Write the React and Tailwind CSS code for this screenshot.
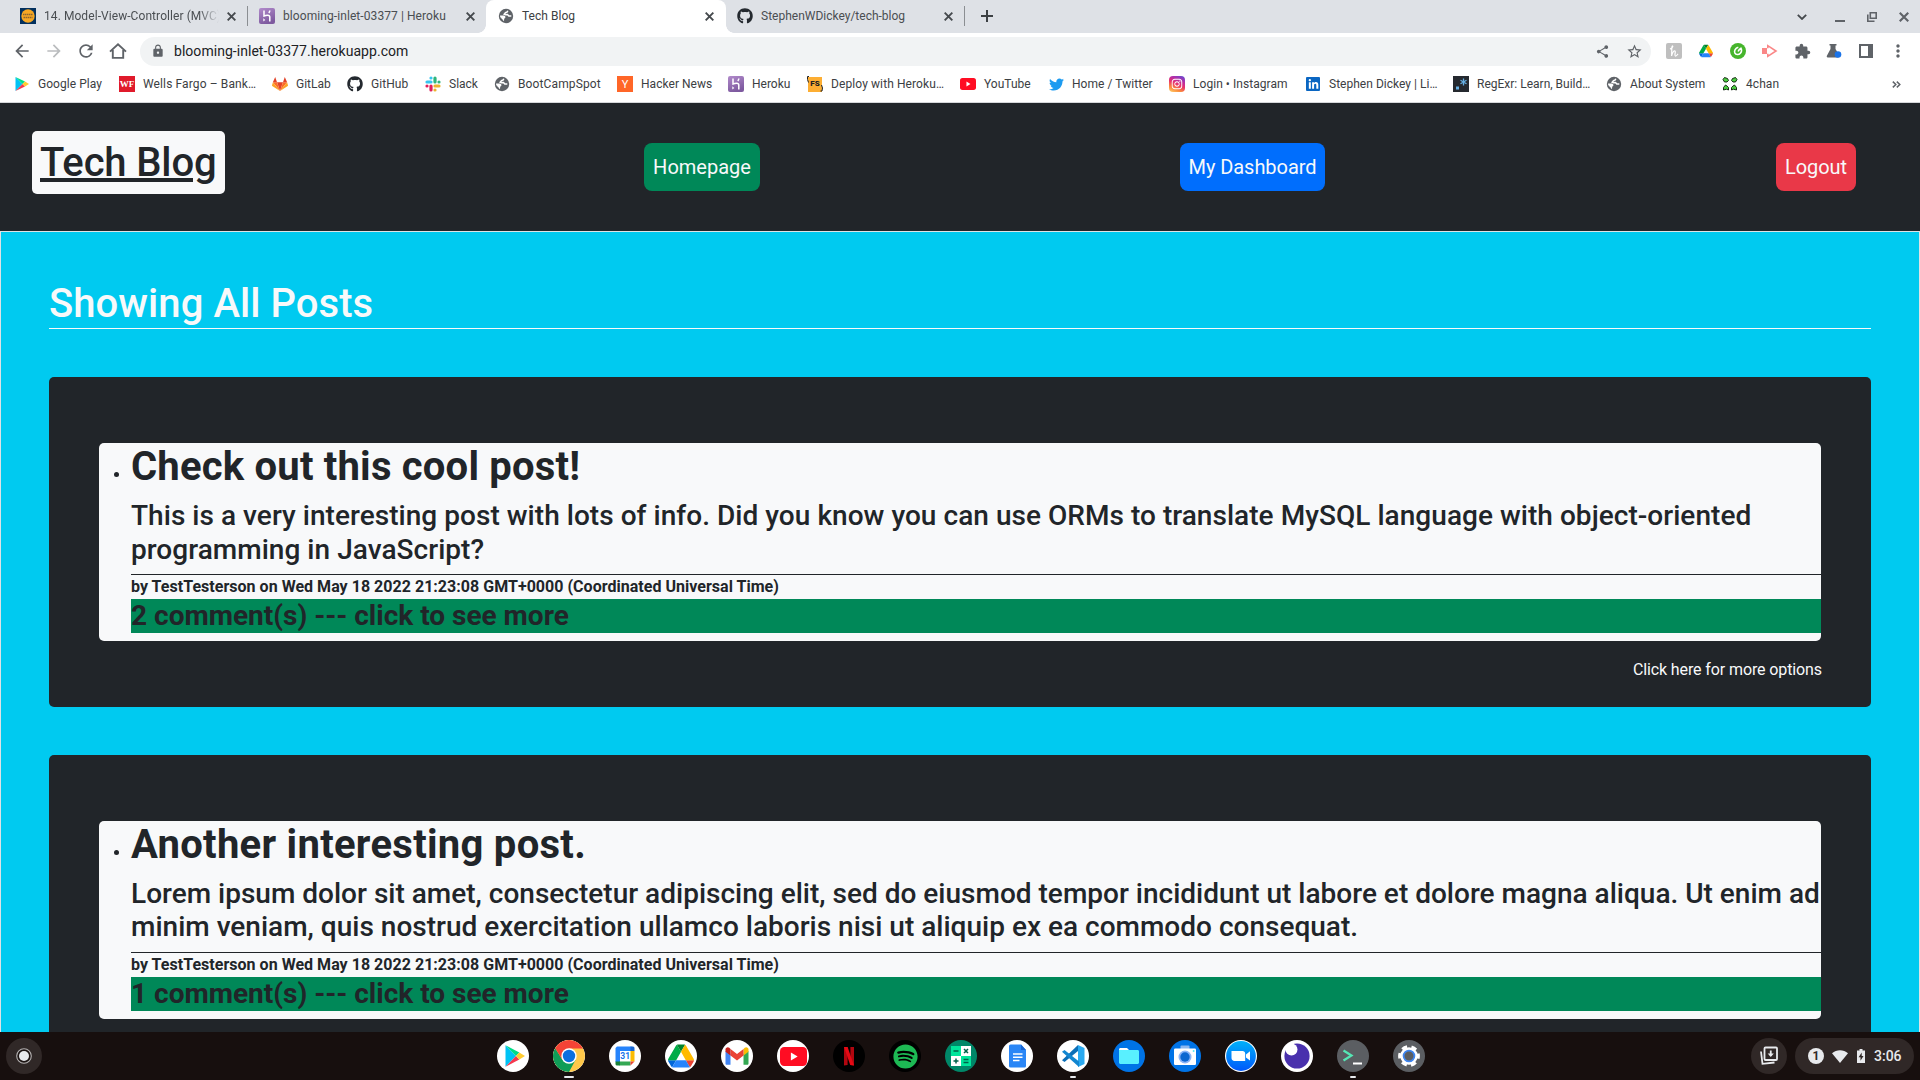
import React from 'react';
import { FaGithub, FaTwitter, FaInstagram, FaLinkedinIn, FaSpotify } from 'react-icons/fa';
import {
  MdArrowBack, MdArrowForward, MdRefresh, MdLock, MdShare, MdStarBorder,
  MdExtension, MdMoreVert,
} from 'react-icons/md';

/* ---------- Small shared glyphs ---------- */

const Close = ({ size = 8, w = 1.7, color = '#45494d' }) => (
  <svg width={size} height={size} viewBox="0 0 8 8" className="shrink-0">
    <path d="M.6.6l6.8 6.8M7.4.6L.6 7.4" stroke={color} strokeWidth={w} />
  </svg>
);

const Globe = () => (
  <svg width="16" height="16" viewBox="0 0 16 16">
    <circle cx="8" cy="8" r="7.200" fill="#5f6368" />
    <path d="M9.800 2.700L9.200 4 7.500 4.700 6.200 6.200l1.300.6 2-.2 1.300 1.500h2.500" stroke="#fff" strokeWidth="1.500" fill="none" />
    <path d="M2 7.400l3.600.2c1.500.2 2.200 1.200 1.700 2.200l-1.100.9-.2 2.300C3.600 12.200 2 10.200 2 7.400z" fill="#fff" />
    <path d="M2.300 9.600c.5 1.500 1.600 2.500 2.600 3" stroke="#5f6368" strokeWidth="1.400" fill="none" />
  </svg>
);

const Heroku = () => (
  <svg width="16" height="16" viewBox="0 0 16 16">
    <defs>
      <linearGradient id="hk" x1="0" y1="0" x2="0.4" y2="1">
        <stop offset="0" stopColor="#b18acb" />
        <stop offset="1" stopColor="#7e5a9f" />
      </linearGradient>
    </defs>
    <rect width="16" height="16" rx="2" fill="url(#hk)" />
    <path d="M5 2.500v5.500c2-.8 5.800-1.400 5.800 1v4.500M10.800 2.500c0 1-.4 1.800-1 2.500" stroke="#fff" strokeWidth="1.500" fill="none" />
    <path d="M4.300 10.200l2 1.700-2 1.700z" fill="#fff" />
  </svg>
);

const PlayLogo = ({ size = 16 }) => (
  <svg width={size} height={size} viewBox="0 0 16 16">
    <path d="M1.500 1v14l7-7z" fill="#00c3f5" />
    <path d="M1.500 1l7 7 2.500-2.400z" fill="#00e08a" />
    <path d="M1.500 15l7-7 2.500 2.400z" fill="#f5394f" />
    <path d="M11 5.600L8.500 8l2.500 2.400L15 8z" fill="#ffcb31" />
  </svg>
);

const DriveLogo = ({ size = 16 }) => (
  <svg width={size} height={size} viewBox="0 0 87.3 78">
    <path d="M6.600 66.850l3.850 6.650c.8 1.400 1.950 2.500 3.300 3.300l13.750-23.800h-27.500c0 1.550.4 3.100 1.200 4.500z" fill="#0066da" />
    <path d="M43.650 25L29.900 1.200c-1.350.8-2.500 1.900-3.300 3.300l-25.400 44A9 9 0 0 0 0 53h27.500z" fill="#00ac47" />
    <path d="M73.550 76.800c1.350-.8 2.500-1.900 3.300-3.300l1.600-2.750 7.650-13.250c.8-1.400 1.200-2.950 1.200-4.500H59.800l5.850 11.500z" fill="#ea4335" />
    <path d="M43.650 25L57.400 1.200C56.050.4 54.500 0 52.900 0H34.400c-1.600 0-3.150.45-4.500 1.200z" fill="#00832d" />
    <path d="M59.800 53H27.500L13.750 76.800c1.350.8 2.900 1.200 4.500 1.200h50.800c1.600 0 3.150-.45 4.500-1.200z" fill="#2684fc" />
    <path d="M73.400 26.500L60.700 4.500c-.8-1.400-1.950-2.500-3.300-3.300L43.650 25 59.800 53h27.450c0-1.550-.4-3.100-1.200-4.500z" fill="#ffba00" />
  </svg>
);

const YouTubeMark = ({ w = 16, h = 12 }) => (
  <svg width={w} height={h} viewBox="0 0 26 18" preserveAspectRatio="none">
    <rect width="26" height="18" rx="4" fill="#ff0d23" />
    <path d="M10.500 5.200v7.600L17 9z" fill="#fff" />
  </svg>
);

const Bootcamp = () => (
  <svg width="16" height="16" viewBox="0 0 16 16">
    <rect width="16" height="16" fill="#03305e" />
    <circle cx="8" cy="8" r="6.700" fill="#f6a723" />
    <path d="M3 6.500h10M3.500 9.500h9" stroke="#8a6430" strokeWidth="1.600" strokeDasharray="1.500 .5" />
  </svg>
);

const GitLab = () => (
  <svg width="16" height="16" viewBox="0 0 16 16">
    <path d="M8 15L5 6.300h6z" fill="#e24329" />
    <path d="M8 15L5 6.300H.9z" fill="#fc6d26" />
    <path d="M8 15l3-8.700h4.100z" fill="#fc6d26" />
    <path d="M.9 6.300L0 9.200c-.1.300 0 .5.200.7L8 15zM15.100 6.300l.9 2.900c.1.300 0 .5-.2.700L8 15z" fill="#fca326" />
    <path d="M.9 6.300H5L3.200 1zM15.100 6.300H11L12.800 1z" fill="#e24329" />
  </svg>
);

const Slack = () => (
  <svg width="16" height="16" viewBox="0 0 16 16" strokeWidth="3.200" strokeLinecap="round">
    <path d="M6 2v0M6 6H2" stroke="#36c5f0" />
    <path d="M10 2v4M14 6v0" stroke="#2eb67d" />
    <path d="M6 10v4M2 10v0" stroke="#e01e5a" />
    <path d="M10 10h4M10 14v0" stroke="#ecb22e" />
  </svg>
);

const LetterTile = ({ className, children }) => (
  <span className={'flex h-4 w-4 items-center justify-center leading-none ' + className}>{children}</span>
);

const DeployIcon = () => (
  <span className="relative flex h-4 w-4 items-center justify-center">
    <span className="flex h-[15px] w-[14px] items-center justify-center bg-[#fdae33] text-[8px] leading-none font-black text-[#222]">FS</span>
    <svg className="absolute top-0 left-0" width="16" height="16" viewBox="0 0 16 16" fill="none" stroke="#222" strokeWidth="1">
      <path d="M2 .5H.5v3l1 3M14.500 9l1 3-.5 3h-1.500" />
    </svg>
  </span>
);

const InstagramTile = () => (
  <span className="flex h-4 w-4 items-center justify-center rounded-[4px] bg-[linear-gradient(25deg,#fec564_5%,#fb8a3c_25%,#e8306d_50%,#b32ea8_72%,#5a4fd6)] text-white">
    <FaInstagram size={12} />
  </span>
);

const RegExr = () => (
  <svg width="16" height="16" viewBox="0 0 16 16">
    <rect width="16" height="16" fill="#25292f" />
    <rect x="3" y="10.500" width="3" height="3" fill="#67b0e4" />
    <path d="M10.500 2.500v7M7.500 4.200l6 3.500M13.500 4.200l-6 3.500" stroke="#67b0e4" strokeWidth="1.300" />
  </svg>
);

const Clover = () => (
  <svg width="16" height="16" viewBox="0 0 16 16" fill="#4ccf42" stroke="#0b1a08" strokeWidth=".9">
    <path d="M1 3.500L2.500 1.500 4 2l1.500.5 1 2-1.500 1.500H2.500zM15 3.500l-1.500-2L12 2l-1.500.5-1 2L11 6h2.500z" />
    <path d="M1.500 14v-2.500L3.500 9l1.500 1 1.500 1.500V14l-2-.8zM14.500 14v-2.500L12.500 9 11 10l-1.500 1.500V14l2-.8z" />
  </svg>
);

/* ---------- Browser window ---------- */

const tabs = [
  { icon: <Bootcamp />, label: '14. Model-View-Controller (MVC)', box: 'w-[247px] pl-5 tracking-[0.070px]', fade: true },
  { icon: <Heroku />, label: 'blooming-inlet-03377 | Heroku', box: 'w-[239px] pl-[11px] border-l border-[#8b8e92] tracking-[0.080px]' },
  { icon: <Globe />, label: 'Tech Blog', active: true },
  { icon: <FaGithub size={16} color="#24292f" />, label: 'StephenWDickey/tech-blog', box: 'w-[238px] pl-[11px]' },
];

function TabStrip() {
  return (
    <div className="flex h-[33px] bg-[#dee1e6]">
      {tabs.map((t) => (
        <div key={t.label} className="flex h-[33px] shrink-0 items-center">
          {t.active ? (
            <div className="relative flex h-[33px] w-[240px] items-center rounded-t-lg bg-white pb-px pl-[12px]">
              <span className="absolute bottom-0 -left-2 h-2 w-2 bg-[radial-gradient(circle_at_0_0,#dee1e6_7.500px,white_8px)]" />
              <span className="absolute -right-2 bottom-0 h-2 w-2 bg-[radial-gradient(circle_at_100%_0,#dee1e6_7.500px,white_8px)]" />
              {t.icon}
              <span className="ml-2 w-[175px] pb-px text-[12px] tracking-[0.040px] text-[#3c4043]">{t.label}</span>
              <span className="ml-[8px] flex"><Close size={9} /></span>
            </div>
          ) : (
            <div className={'mb-px flex h-5 items-center ' + t.box}>
              {t.icon}
              <span className={'ml-2 w-[175px] overflow-hidden pb-px text-[12px] whitespace-nowrap text-[#4a4e52] ' + (t.fade ? '[mask-image:linear-gradient(90deg,#000_155px,transparent_175px)]' : '')}>
                {t.label}
              </span>
              <span className="ml-[8px] flex"><Close size={9} /></span>
            </div>
          )}
        </div>
      ))}
      <div className="flex h-[33px] items-center pb-px">
        <span className="h-5 w-px bg-[#8b8e92]" />
        <svg className="ml-[16px]" width="12" height="12" viewBox="0 0 12 12"><path d="M6 0v12M0 6h12" stroke="#3c4043" strokeWidth="2" /></svg>
      </div>
      <div className="ml-auto flex h-[33px] items-center pr-[11px]">
        <svg width="10" height="6" viewBox="0 0 10 6" fill="none"><path d="M.8.8L5 5 9.200.8" stroke="#45494d" strokeWidth="1.800" /></svg>
        <svg className="mt-[9px] ml-[28px]" width="10" height="2"><rect width="10" height="2" fill="#5f6368" /></svg>
        <svg className="mt-px ml-[22px]" width="10" height="10" viewBox="0 0 10 10" fill="none" stroke="#5f6368" strokeWidth="1.600">
          <path d="M3.300.8h5.900v5.400H3.300zM.8 2.500v6.700h6.700" />
        </svg>
        <span className="mt-px ml-[22px] flex"><Close size={10} w={1.700} color="#5f6368" /></span>
      </div>
    </div>
  );
}

const Slot = ({ children }) => <span className="mb-px flex w-8 shrink-0 items-center justify-center">{children}</span>;

function Toolbar() {
  return (
    <div className="flex h-[37px] items-center pl-[6px] text-[#5f6368]">
      <Slot><MdArrowBack size={20} /></Slot>
      <Slot><MdArrowForward size={20} color="#babcbe" /></Slot>
      <Slot><MdRefresh size={20} /></Slot>
      <Slot>
        <svg width="18" height="18" viewBox="0 0 18 18" fill="none" stroke="#5f6368" strokeWidth="1.900">
          <path d="M1 9.600L9 2.200l8 7.400M3.800 8v7.900h10.400V8" />
        </svg>
      </Slot>
      <div className="ml-[6px] flex h-[29px] w-[1511px] items-center rounded-full bg-[#f1f3f4] pl-[11px]">
        <MdLock size={14} className="mb-px" />
        <span className="ml-[9px] text-[14px] tracking-[0.040px] text-[#202124]">blooming-inlet-03377.herokuapp.com</span>
        <span className="ml-auto flex items-center pr-px">
          <Slot>
            <MdShare size={15} />
          </Slot>
          <Slot><MdStarBorder size={17} /></Slot>
        </span>
      </div>
      <div className="ml-[7px] flex items-center">
        <Slot>
          <span className="flex h-4 w-4 items-center justify-center rounded-[2px] bg-[#bfbfbf]">
            <svg width="10" height="12" viewBox="0 0 10 12" fill="none" stroke="#fff" strokeWidth="1.200">
              <path d="M1 4C3 3 4.500 1.500 3.500 1S2.800 8 2.600 11C3.200 7.500 5 5.500 6 6s-.8 4.500.3 5S8.500 9.500 9 9" />
            </svg>
          </span>
        </Slot>
        <Slot><DriveLogo size={14} /></Slot>
        <Slot>
          <svg width="16" height="16" viewBox="0 0 16 16" fill="none">
            <circle cx="8" cy="8" r="8" fill="#46b52c" />
            <path d="M8.300 4.200C5.300 5 4 7.800 4.800 9.800c1 2.200 4 2.300 5.600.5 1.200-1.400 1.400-3.300.6-5-1.300.7-2.300 1.700-2.900 3.200" stroke="#fff" strokeWidth="1.600" />
          </svg>
        </Slot>
        <Slot>
          <svg width="16" height="14" viewBox="0 0 16 14" fill="none">
            <rect x="0" y="4" width="5" height="6" fill="#fa8787" />
            <path d="M5.800 4.200V1.700L14 7l-8.200 5.300V9.800" stroke="#fa8787" strokeWidth="1.600" />
          </svg>
        </Slot>
        <Slot><MdExtension size={17} /></Slot>
        <Slot>
          <svg width="16" height="16" viewBox="0 0 16 16">
            <path d="M3.500 1h7v1.500h-1V6l3 5v3.500H1.500c-.8-.4-1-1-.6-1.700L4.500 6V2.500h-1z" fill="#5f6368" />
            <circle cx="12" cy="11.500" r="3.300" fill="#1a73e8" />
          </svg>
        </Slot>
        <Slot>
          <svg width="14" height="14" viewBox="0 0 14 14">
            <rect x="1" y="1" width="12" height="12" fill="none" stroke="#5f6368" strokeWidth="2" />
            <rect x="9" y="1" width="4" height="12" fill="#5f6368" />
          </svg>
        </Slot>
        <Slot><MdMoreVert size={20} /></Slot>
      </div>
    </div>
  );
}

const bookmarks = [
  [<PlayLogo />, 'Google Play', 'w-[105px] tracking-[0.050px]'],
  [<LetterTile className="bg-[#e01a2b] font-['Liberation_Serif'] text-[9px] font-bold tracking-normal text-white">WF</LetterTile>, 'Wells Fargo – Bank…', 'w-[153px] tracking-[0.120px]'],
  [<GitLab />, 'GitLab', 'w-[75px]'],
  [<FaGithub size={16} color="#24292f" />, 'GitHub', 'w-[78px] tracking-[0.060px]'],
  [<Slack />, 'Slack', 'w-[69px]'],
  [<Globe />, 'BootCampSpot', 'w-[123px] tracking-[0.120px]'],
  [<LetterTile className="bg-[#ff6628] text-[11px] text-white">Y</LetterTile>, 'Hacker News', 'w-[111px] tracking-[0.040px]'],
  [<Heroku />, 'Heroku', 'w-[79px]'],
  [<DeployIcon />, 'Deploy with Heroku…', 'w-[153px] tracking-[0.100px]'],
  [<YouTubeMark />, 'YouTube', 'w-[88px]'],
  [<FaTwitter size={15} color="#1d9bf0" />, 'Home / Twitter', 'w-[121px] tracking-[0.050px]'],
  [<InstagramTile />, 'Login • Instagram', 'w-[136px] tracking-[0.050px]'],
  [<span className="flex h-[14px] w-[14px] items-center justify-center rounded-[1px] bg-[#0a66c2] text-white"><FaLinkedinIn size={11} /></span>, 'Stephen Dickey | Li…', 'w-[148px] tracking-[0.020px]'],
  [<RegExr />, 'RegExr: Learn, Build…', 'w-[153px]'],
  [<Globe />, 'About System', 'w-[116px] tracking-[0.060px]'],
  [<Clover />, '4chan', 'w-[80px] tracking-[0.080px]'],
];

function Bookmarks() {
  return (
    <div className="flex h-[33px] items-center border-b border-[#d5d7da] pb-[4px] pl-[14px]">
      {bookmarks.map(([icon, label, width]) => (
        <div key={label} className={'flex shrink-0 items-center ' + width}>
          <span className="flex w-4 justify-center">{icon}</span>
          <span className="ml-2 text-[12px] whitespace-nowrap text-[#3c4043]">{label}</span>
        </div>
      ))}
      <svg className="mr-[19px] ml-auto" width="9" height="7" viewBox="0 0 9 7" fill="none" stroke="#5f6368" strokeWidth="1.500">
        <path d="M.8.6l3 2.900-3 2.900M4.800.6l3 2.900-3 2.900" />
      </svg>
    </div>
  );
}

/* ---------- Blog page ---------- */

function Post({ title, titleClass, body, bodyClass, count, options }) {
  return (
    <section className="mb-12 h-[330px] rounded-[5px] bg-[#212529] px-[50px] pt-[66px]">
      <ul className="h-[198px] rounded-[5px] bg-[#f8f9fa] pl-8 text-[#212529]">
        <li className="relative">
          <span className="absolute top-[29px] -left-[17px] h-[5px] w-[5px] rounded-full bg-[#212529]" />
          <h2 className={'mb-2 text-[40px] leading-[48px] font-bold ' + titleClass}>{title}</h2>
          <h3 className={'-mr-1 mb-2 h-[67px] text-[28px] font-medium ' + bodyClass}>{body}</h3>
          <p className="h-[25px] border-t border-[#212529] pt-[2px] text-[16px] leading-[19px] font-bold tracking-[0.025px]">
            by TestTesterson on Wed May 18 2022 21:23:08 GMT+0000 (Coordinated Universal Time)
          </p>
          <p className="h-[34px] bg-[#008858] text-[28px] leading-[33.600px] font-bold">{count} comment(s) --- click to see more</p>
        </li>
      </ul>
      {options && (
        <p className="mt-[17px] -mr-px text-right text-[16px] leading-6 tracking-[-0.110px] text-[#f8f9fa]">{options}</p>
      )}
    </section>
  );
}

function BlogPage() {
  return (
    <main className="h-[929px] overflow-hidden bg-[#00caf0]">
      <header className="flex h-32 items-start bg-[#212529] pt-[28px] pl-8">
        <h1 className="h-[63px] w-[193px] rounded-[5px] bg-[#f8f9fa] px-2 pt-[8px] text-[40px] leading-[48px] font-medium tracking-[-0.150px] whitespace-nowrap text-[#212529] underline">Tech Blog</h1>
        <a className="mt-3 ml-[419px] h-12 w-[116px] rounded-lg bg-[#008858] text-center text-[20px] leading-[48px] text-[#f8f9fa]">Homepage</a>
        <a className="mt-3 ml-[420px] h-12 w-[145px] rounded-lg bg-[#006efd] text-center text-[20px] leading-[48px] tracking-[-0.050px] text-[#f8f9fa]">My Dashboard</a>
        <a className="mt-3 ml-[451px] h-12 w-[80px] rounded-lg bg-[#e93848] text-center text-[20px] leading-[48px] tracking-[-0.050px] text-[#f8f9fa]">Logout</a>
      </header>
      <div className="h-[801px] overflow-hidden border border-b-0 border-[#dee2e6] px-12 pt-12">
        <h2 className="mb-12 h-[49px] border-b border-[#f8f9fa] text-[40px] leading-[48px] font-medium tracking-[0.060px] text-[#f8f9fa]">Showing All Posts</h2>
        <Post
          title="Check out this cool post!"
          titleClass="tracking-[0.200px]"
          body="This is a very interesting post with lots of info. Did you know you can use ORMs to translate MySQL language with object-oriented programming in JavaScript?"
          bodyClass="leading-[33.500px] tracking-[0.040px]"
          count="2"
          options="Click here for more options"
        />
        <Post
          title="Another interesting post."
          titleClass="tracking-[0.280px]"
          body="Lorem ipsum dolor sit amet, consectetur adipiscing elit, sed do eiusmod tempor incididunt ut labore et dolore magna aliqua. Ut enim ad minim veniam, quis nostrud exercitation ullamco laboris nisi ut aliquip ex ea commodo consequat."
          bodyClass="leading-[33px] tracking-[0.008px]"
          count="1"
        />
      </div>
    </main>
  );
}

/* ---------- Shelf ---------- */

const Art = ({ children }) => <svg width="32" height="32" viewBox="0 0 32 32">{children}</svg>;

const apps = [
  {
    bg: 'bg-white',
    art: (
      <Art>
        <path d="M8.500 5.200v21.600L19 16z" fill="#00c3f5" />
        <path d="M8.500 5.200L19 16l3.300-3.400z" fill="#00dd87" />
        <path d="M8.500 26.800L19 16l3.300 3.400z" fill="#f5394f" />
        <path d="M22.300 12.600L19 16l3.300 3.400L28 16z" fill="#ffcb31" />
      </Art>
    ),
  },
  {
    bg: 'bg-white', mark: 'w-[10px]',
    art: (
      <Art>
        <circle cx="16" cy="16" r="16" fill="#ffc84a" />
        <path d="M2.140 8A16 16 0 0 0 16 32L22.500 20 16 16 9.500 20z" fill="#0f9d58" />
        <path d="M16 8.500h14.100A16 16 0 0 0 2.140 8L9.500 20z" fill="#f44336" />
        <circle cx="16" cy="16" r="7.700" fill="#fff" />
        <circle cx="16" cy="16" r="6.200" fill="#0b6fe0" />
      </Art>
    ),
  },
  {
    bg: 'bg-white',
    art: (
      <Art>
        <path d="M8 6.500h14.500V11H11v11H6.500V8z" fill="#2684fc" />
        <path d="M21.500 6.500H24A1.500 1.500 0 0 1 25.500 8v3h-4z" fill="#1967d2" />
        <path d="M21.500 11h4v10.500h-4z" fill="#fbbc04" />
        <path d="M10.500 21.500h11v4h-11z" fill="#34a853" />
        <path d="M6.500 21.500h4.500v4H8A1.500 1.500 0 0 1 6.500 24z" fill="#188038" />
        <path d="M21.500 21.500h4l-4 4z" fill="#ea4335" />
        <text x="16.200" y="19.200" textAnchor="middle" fontSize="8.500" fontWeight="700" fill="#1a73e8">31</text>
      </Art>
    ),
  },
  { bg: 'bg-white', art: <DriveLogo size={26} /> },
  {
    bg: 'bg-white',
    art: (
      <Art>
        <path d="M4.500 11v12.500c0 .8.500 1.300 1.300 1.300H9.500V14z" fill="#4285f4" />
        <path d="M22.500 14v10.800h3.700c.8 0 1.300-.5 1.300-1.300V11z" fill="#34a853" />
        <path d="M22.500 9v6.500l5-3.800V9.500c0-2-2.200-3-3.800-1.800z" fill="#fbbc04" />
        <path d="M9.500 15.500V9l6.500 4.900L22.500 9v6.500L16 20.400z" fill="#ea4335" />
        <path d="M4.500 9.500v2.200l5 3.800V9L8.300 7.700C6.700 6.500 4.500 7.500 4.500 9.500z" fill="#c5221f" />
      </Art>
    ),
  },
  { bg: 'bg-white', art: <YouTubeMark w={27} h={19} /> },
  {
    bg: 'bg-black',
    art: (
      <Art>
        <path d="M11 7h3.600v18l-3.600.5zM17.400 7H21v18.500l-3.600-.5z" fill="#b1060f" />
        <path d="M11 7h3.600L21 25.500l-3.800-.5z" fill="#e50914" />
      </Art>
    ),
  },
  { bg: 'bg-black', art: <FaSpotify size={25} color="#1db954" /> },
  {
    bg: 'bg-[#008768]',
    art: (
      <Art>
        <path d="M6 6h10v10H6zM16 16h10v10H16z" fill="#00e59b" />
        <path d="M16 6h10v10H16zM6 16h10v10H6z" fill="#fff" />
        <path d="M8.500 11h5M18.500 19.500h5M18.500 22.500h5M8.500 21h5M11 18.500v5M19 9l4 4M23 9l-4 4" stroke="#00614a" strokeWidth="1.500" />
      </Art>
    ),
  },
  {
    bg: 'bg-white',
    art: (
      <Art>
        <path d="M9.500 4.500H20L25 10v16a1.500 1.500 0 0 1-1.500 1.500h-14A1.500 1.500 0 0 1 8 26V6a1.500 1.500 0 0 1 1.500-1.500z" fill="#2a86f6" />
        <path d="M20 4.500V10h5z" fill="#1a66d2" />
        <path d="M12 14h9.500M12 17.200h9.500M12 20.400h6.500" stroke="#fff" strokeWidth="1.500" />
      </Art>
    ),
  },
  {
    bg: 'bg-white', mark: 'w-[6px]',
    art: (
      <Art>
        <path d="M21 5l6.500 3v16L21 27z" fill="#29a9f0" />
        <path d="M21 5v6L7.500 22 5 20.200z" fill="#0b6fb8" />
        <path d="M5 11.800L7.500 10 22 21.500V27z" fill="#1286d0" />
      </Art>
    ),
  },
  {
    bg: 'bg-[#0073e6]',
    art: (
      <Art>
        <path d="M6 9.500C6 8.700 6.700 8 7.500 8H14l2.500 2.500h-10z" fill="#fff" />
        <path d="M6 10h18.500c.8 0 1.500.6 1.500 1.400v11.100c0 .8-.7 1.500-1.500 1.500h-17c-.8 0-1.500-.7-1.500-1.500z" fill="#59f0ff" />
      </Art>
    ),
  },
  {
    bg: 'bg-[#0073e6]',
    art: (
      <Art>
        <rect x="11.500" y="5.500" width="9" height="5" rx="1" fill="#8db8ef" />
        <rect x="5" y="8.500" width="22" height="16.500" rx="1.300" fill="#fff" />
        <circle cx="16" cy="17" r="6.500" fill="#8ab4f8" />
        <circle cx="16" cy="17" r="4.700" fill="#0b66d0" />
        <circle cx="24.600" cy="11" r="1" fill="#5be8ef" />
      </Art>
    ),
  },
  {
    bg: 'bg-white',
    art: (
      <Art>
        <defs>
          <linearGradient id="zm" x1="0" y1="0" x2="0" y2="1"><stop offset="0" stopColor="#00b0fa" /><stop offset="1" stopColor="#0059fb" /></linearGradient>
        </defs>
        <circle cx="16" cy="16" r="14.900" fill="url(#zm)" />
        <path d="M6.500 11h11c1.600 0 2.700 1 2.700 2.600V21H9.400c-1.700 0-2.900-1.200-2.900-2.900zM21 14.500l4-3.200v9.200l-4-3z" fill="#fff" />
      </Art>
    ),
  },
  {
    bg: 'bg-white',
    art: (
      <Art>
        <circle cx="16" cy="16" r="12.600" fill="#4930ad" />
        <circle cx="10.500" cy="9.500" r="6" fill="#fff" />
      </Art>
    ),
  },
  {
    bg: 'bg-[#5b5e62]', mark: 'w-[6px]',
    art: (
      <Art>
        <path d="M6.500 10.500l8 5-8 5" stroke="#55e6b4" strokeWidth="2.200" fill="none" />
        <path d="M16 23.500h9" stroke="#fff" strokeWidth="2" />
      </Art>
    ),
  },
  {
    bg: 'bg-[#5b5e62]',
    art: (
      <Art>
        <circle cx="16" cy="16" r="9" fill="none" stroke="#fff" strokeWidth="3.800" strokeDasharray="5.200 4.225" strokeDashoffset="2.600" />
        <circle cx="16" cy="16" r="6.800" fill="none" stroke="#fff" strokeWidth="4" />
        <circle cx="16" cy="16" r="5.400" fill="#5b5e62" stroke="#3f86f0" strokeWidth="1.800" />
      </Art>
    ),
  },
];

function Shelf() {
  return (
    <footer className="flex h-12 items-center bg-[#170f0e] px-[6px]">
      <div className="flex h-9 w-9 items-center justify-center rounded-full bg-[#302827]">
        <svg width="16" height="16" viewBox="0 0 16 16">
          <circle cx="8" cy="8" r="7.300" fill="#1d1514" stroke="#b5b2b2" strokeWidth="1.100" />
          <circle cx="8" cy="8" r="5" fill="#e8eaed" />
        </svg>
      </div>
      <div className="ml-[455px] flex h-12 gap-6">
        {apps.map((a, i) => (
          <div key={i} className="flex h-12 w-8 flex-col items-center pt-2">
            <div className={'flex h-8 w-8 items-center justify-center overflow-hidden rounded-full ' + a.bg}>{a.art}</div>
            {a.mark && <div className={'mt-1 h-[2px] rounded-[1px] bg-[#e8eaed] ' + a.mark} />}
          </div>
        ))}
      </div>
      <div className="ml-auto flex h-9 w-9 items-center justify-center rounded-full bg-[#302827]">
        <svg width="20" height="20" viewBox="0 0 20 20" fill="none" stroke="#e8eaed" strokeWidth="1.800">
          <rect x="5.500" y="1.500" width="12.500" height="12.500" rx="1" />
          <path d="M2 5.500l1.500 12.300 12-1.300M11.750 4.500v5.500" />
          <path d="M8.700 7.500h6.100l-3.050 3.500z" fill="#e8eaed" stroke="none" />
        </svg>
      </div>
      <div className="ml-2 flex h-9 w-[119px] items-center rounded-full bg-[#302827] pl-[13px] text-[#e8eaed]">
        <span className="flex h-4 w-4 items-center justify-center rounded-full bg-[#e8eaed] text-[12px] leading-none font-bold text-[#302827]">1</span>
        <svg className="ml-2" width="16" height="13" viewBox="0 0 16 13"><path d="M0 3.200C4.500-.7 11.500-.7 16 3.200L8 13z" fill="#e8eaed" /></svg>
        <svg className="ml-[9px]" width="8" height="14" viewBox="0 0 8 14">
          <path d="M2.500 0h3v1.400H8V14H0V1.400h2.500z" fill="#e8eaed" />
          <path d="M4.700 3.500L1.600 8.300h1.900v3.500L6.500 7H4.700z" fill="#302827" />
        </svg>
        <span className="ml-[9px] text-[14px] font-medium">3:06</span>
      </div>
    </footer>
  );
}

export default function App() {
  return (
    <div className="flex h-[1080px] w-[1920px] flex-col overflow-hidden bg-white font-['Roboto',sans-serif]">
      <TabStrip />
      <Toolbar />
      <Bookmarks />
      <BlogPage />
      <Shelf />
    </div>
  );
}
